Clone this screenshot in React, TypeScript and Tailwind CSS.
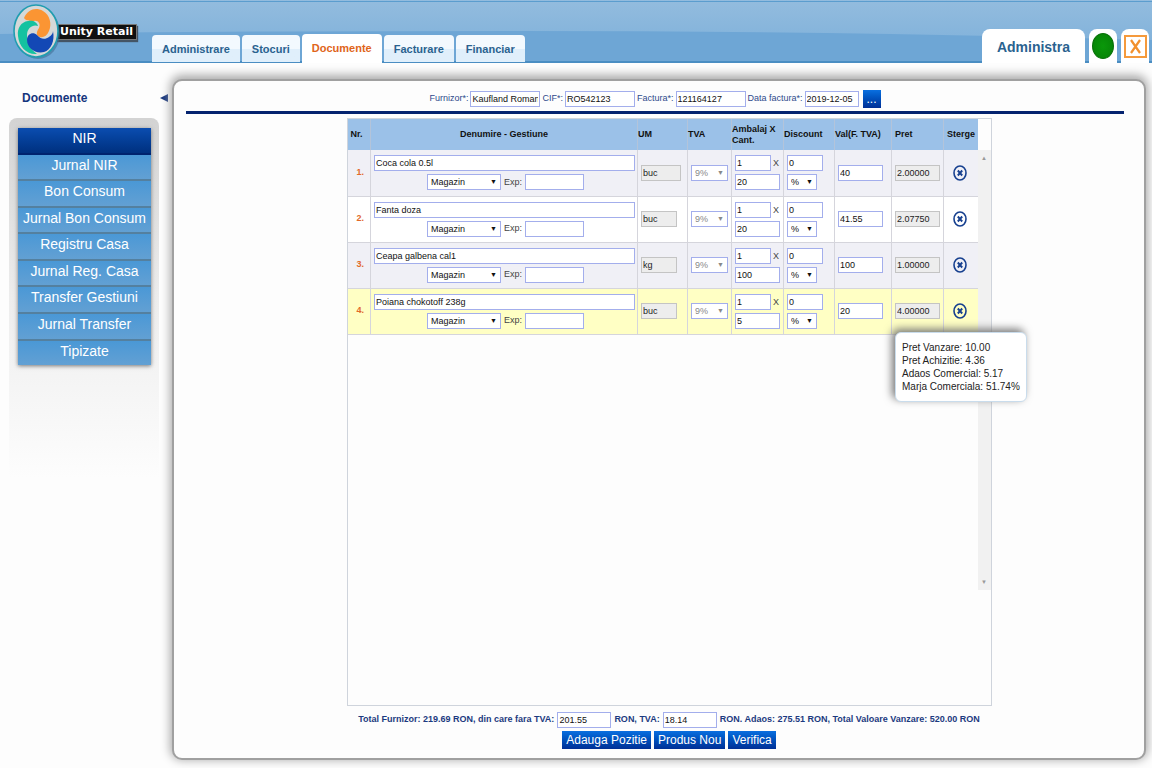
import type { ReactNode } from 'react';

import { clsx } from 'clsx';

const TABS = ['Administrare', 'Stocuri', 'Documente', 'Facturare', 'Financiar'];

const MENU = [
  'NIR',
  'Jurnal NIR',
  'Bon Consum',
  'Jurnal Bon Consum',
  'Registru Casa',
  'Jurnal Reg. Casa',
  'Transfer Gestiuni',
  'Jurnal Transfer',
  'Tipizate',
];

const COLUMNS = [
  { label: 'Nr.', width: 'w-[23px]' },
  { label: 'Denumire - Gestiune', width: 'w-[267px]' },
  { label: 'UM', width: 'w-[50px]' },
  { label: 'TVA', width: 'w-[44px]' },
  { label: 'Ambalaj X Cant.', width: 'w-[52px]' },
  { label: 'Discount', width: 'w-[51px]' },
  { label: 'Val(F. TVA)', width: 'w-[57px]' },
  { label: 'Pret', width: 'w-[52px]' },
  { label: 'Sterge', width: 'w-[34px]' },
];

const ROWS = [
  { name: 'Coca cola 0.5l', um: 'buc', pack: '1', qty: '20', value: '40', price: '2.00000' },
  { name: 'Fanta doza', um: 'buc', pack: '1', qty: '20', value: '41.55', price: '2.07750' },
  { name: 'Ceapa galbena cal1', um: 'kg', pack: '1', qty: '100', value: '100', price: '1.00000' },
  { name: 'Poiana chokotoff 238g', um: 'buc', pack: '1', qty: '5', value: '20', price: '4.00000' },
];

const PRICE_INFO = [
  'Pret Vanzare: 10.00',
  'Pret Achizitie: 4.36',
  'Adaos Comercial: 5.17',
  'Marja Comerciala: 51.74%',
];

const TOTALS_INPUT = 'w-[54px]';

function Field({ label, value, className, disabled }: { label: string; value?: string; className: string; disabled?: boolean }) {
  return (
    <input
      aria-label={label}
      defaultValue={value}
      disabled={disabled}
      className={clsx(
        'block h-4 border px-px text-[9px] leading-3 font-normal outline-none',
        disabled ? 'border-[#c4c4c4] bg-[#ededed] text-[#222]' : 'border-[#a3aeec] bg-white text-[#111]',
        className,
      )}
    />
  );
}

function Dropdown({ label, value, className, disabled }: { label: string; value: string; className: string; disabled?: boolean }) {
  return (
    <span className={clsx('relative block', disabled ? 'text-[#888]' : 'text-[#111]', className)}>
      <select
        aria-label={label}
        disabled={disabled}
        defaultValue={value}
        className="block h-4 w-full appearance-none border border-[#a3aeec] bg-white px-[3px] text-[9px] leading-3 opacity-100">
        <option>{value}</option>
      </select>
      <span aria-hidden="true" className="pointer-events-none absolute top-1 right-1 text-[7px] leading-2">
        ▼
      </span>
    </span>
  );
}

function HeaderField({ label, value, className }: { label: string; value: string; className: string }) {
  return (
    <label className="flex items-center gap-[2px]">
      {label}
      <Field label={label} value={value} className={className} />
    </label>
  );
}

function ActionButton({ children }: { children: ReactNode }) {
  return (
    <button type="button" className="h-[18px] bg-linear-to-b from-[#0a6fe0] to-[#002f96] px-1 text-[12px] leading-4 text-white">
      {children}
    </button>
  );
}

function Logo() {
  return (
    <a href="#" className="flex items-center self-start pl-3">
      <svg viewBox="0 0 48 56" className="relative z-10 h-14 w-12" aria-hidden="true">
        <ellipse cx="26" cy="29" rx="22" ry="26" fill="#3f6f96" opacity=".6" />
        <ellipse cx="24" cy="27" rx="22" ry="26" fill="#d5d8d8" stroke="#209db0" strokeWidth="1.6" />
        <path
          d="M12 14C16 5 24 3 31 7c7 4 9 13 6 20-2 5-6 7-9 6-4-1-4-5-1-9 2-4-1-8-5-7-4 0-8 0-10-3Z"
          fill="#fb9533"
        />
        <path
          d="M6 32c-1-8 3-14 10-15 5-1 9 1 10 5-5-2-11 2-11 9 0 8 3 14 10 19C15 51 7 43 6 32Z"
          fill="#14c2a0"
        />
        <path
          d="M15 36c0-6 6-9 10-5 3 4 8 5 12 2 3-2 4-4 4-6 2 10-2 19-9 21-9 2-17-4-17-12Z"
          fill="#1348b5"
        />
      </svg>
      <span className="-ml-1 border border-[#777] bg-[#101010] px-[3px] font-['DejaVu_Sans'] text-[11px] leading-[14px] font-bold whitespace-nowrap text-white shadow-[1px_2px_1px_#456]">
        Unity Retail
      </span>
    </a>
  );
}

function TopBar() {
  return (
    <header className="relative flex h-[63px] items-end border-b-2 border-[#4a8dc2] bg-[#6ea6d5]">
      <svg viewBox="0 0 1152 61" preserveAspectRatio="none" className="absolute inset-0 h-full w-full" aria-hidden="true">
        <defs>
          <linearGradient id="sky" x1="0" y1="0" x2="0" y2="1">
            <stop offset="0" stopColor="#93bcde" />
            <stop offset="1" stopColor="#83b3db" />
          </linearGradient>
        </defs>
        <path d="M0 0H1152V40Q850 31 520 31Q200 31 0 34Z" fill="url(#sky)" />
        <path d="M0 1.5H1152" stroke="#5b9dce" />
      </svg>
      <div className="relative -mb-0.5 flex h-[63px] w-full items-end">
        <div className="h-[59px] w-[152px]">
          <Logo />
        </div>
        <nav className="flex flex-1 items-end gap-[2px]">
          {TABS.map((tab) => (
            <a
              key={tab}
              href="#"
              className={clsx(
                'rounded-t px-[10px] text-[11px] font-bold whitespace-nowrap',
                tab === 'Documente'
                  ? 'h-[29px] bg-white leading-[29px] text-[#e0651a]'
                  : 'mb-px h-[27px] bg-linear-to-b from-[#f3f9fe] from-50% to-[#e0effb] to-50% leading-[28px] text-[#2a628f]',
              )}>
              {tab}
            </a>
          ))}
        </nav>
        <div className="flex items-end gap-1 pr-[3px]">
          <a href="#" className="h-[34px] rounded-t-lg bg-white px-[15px] text-[14px] leading-9 font-bold text-[#2a628f]">
            Administra
          </a>
          <div className="flex h-[34px] w-7 items-center justify-center rounded-t-lg bg-white">
            <span className="h-[26px] w-[22px] rounded-[50%] border border-[#067006] bg-radial from-[#0a980a] to-[#078007]" />
          </div>
          <div className="flex h-[34px] w-7 items-center justify-center rounded-t-lg bg-white">
            <button type="button" aria-label="Inchide" className="h-[23px] w-[23px] border-2 border-[#f59a3c] text-[#f2902c]">
              <svg viewBox="0 0 19 19" className="h-[19px] w-[19px]" aria-hidden="true">
                <path d="M5 3L14 16M14 3L5 16" stroke="currentColor" strokeWidth="2.2" />
              </svg>
            </button>
          </div>
        </div>
      </div>
    </header>
  );
}

function Sidebar() {
  return (
    <aside className="w-[172px] shrink-0 pt-[25px]">
      <div className="flex items-center justify-between pr-1 pl-[22px]">
        <h2 className="text-[12px] leading-5 font-bold text-[#15357d]">Documente</h2>
        <button type="button" aria-label="Ascunde meniul">
          <svg viewBox="0 0 8 8" className="h-2 w-2" aria-hidden="true">
            <path d="M0 4L8 0V8Z" fill="#15357d" />
          </svg>
        </button>
      </div>
      <nav className="mt-[10px] mr-[13px] ml-[9px] h-[360px] rounded-t-lg bg-linear-to-b from-[#d3d3d3] via-[#ededed] via-50% to-[#fdfdfd] px-2 pt-[10px]">
        <ul className="ml-px flex h-[237px] flex-col shadow-[0_1px_4px_#777]">
          {MENU.map((item) => (
            <li
              key={item}
              className={clsx(
                'flex-1 border-b-2 last:border-b-0',
                item === 'NIR'
                  ? 'border-[#00246f] bg-linear-to-b from-[#0b4db0] to-[#00307f]'
                  : 'border-[#54809f] bg-linear-to-b from-[#4a98d6] to-[#62a0d3]',
              )}>
              <a href="#" className="block text-center text-[14px] leading-5 whitespace-nowrap text-white">
                {item}
              </a>
            </li>
          ))}
        </ul>
      </nav>
    </aside>
  );
}

function ItemsTable() {
  return (
    <table className="w-[630px] table-fixed border-collapse text-[9px]">
      <thead>
        <tr className="h-[31px] bg-[#9bc1e8] text-left leading-[11px] text-[#111]">
          {COLUMNS.map((col, i) => (
            <th
              key={col.label}
              className={clsx(
                'border-r border-[#b3c4da] p-0 font-bold last:border-r-0',
                i === 1 && 'text-center',
                (i === 0 || i > 6) && 'pl-[3px]',
                col.width,
              )}>
              {col.label}
            </th>
          ))}
        </tr>
      </thead>
      <tbody>
        {ROWS.map((row, i) => (
          <tr
            key={row.name}
            className={clsx(
              'h-[46px] border-b border-[#d5d5dc] [&>td]:border-r [&>td]:border-[#d5d5dc] [&>td]:p-0 [&>td]:pl-[3px] [&>td:last-child]:border-r-0',
              i === 3 ? 'bg-[#ffffc4]' : i % 2 ? 'bg-white' : 'bg-[#f0f0f6]',
            )}>
            <td className="text-center font-bold text-[#e2692a]">{i + 1}.</td>
            <td>
              <Field label="Denumire" value={row.name} className="w-[261px]" />
              <div className="mt-[3px] flex items-center justify-center gap-[3px] text-[#444]">
                <Dropdown label="Gestiune" value="Magazin" className="w-[74px]" />
                <label className="flex items-center gap-[3px]">
                  Exp:
                  <Field label="Exp" className="w-[59px]" />
                </label>
              </div>
            </td>
            <td>
              <Field label="UM" value={row.um} disabled className={i === 0 ? 'w-10' : 'w-9'} />
            </td>
            <td>
              <Dropdown label="TVA" value="9%" disabled className="w-[37px]" />
            </td>
            <td>
              <div className="flex items-center gap-[2px] leading-4 text-[#444]">
                <Field label="Ambalaj" value={row.pack} className="w-9" />X
              </div>
              <Field label="Cantitate" value={row.qty} className="mt-[3px] w-[45px]" />
            </td>
            <td>
              <Field label="Discount" value="0" className="w-9" />
              <Dropdown label="Tip discount" value="%" className="mt-[3px] w-[30px]" />
            </td>
            <td>
              <Field label="Valoare" value={row.value} className="w-[45px]" />
            </td>
            <td>
              <div className="relative">
                <Field label="Pret" value={row.price} disabled className="w-[45px]" />
                {i === 3 ? (
                  <div
                    role="tooltip"
                    className="absolute top-[29px] left-0 z-20 rounded-md border border-[#c9dcec] bg-white px-[6px] py-2 text-[10px] leading-[13px] whitespace-nowrap text-[#222] shadow-[-3px_-3px_8px_#777]">
                    {PRICE_INFO.map((line) => (
                      <p key={line}>{line}</p>
                    ))}
                  </div>
                ) : null}
              </div>
            </td>
            <td>
              <button type="button" aria-label={`Sterge ${row.name}`} className="block">
                <svg viewBox="0 0 14 16" className="mx-[6px] h-4 w-[14px]" fill="none" stroke="#17408f" aria-hidden="true">
                  <ellipse cx="7" cy="8" rx="6" ry="7" strokeWidth="1.6" />
                  <path d="M4.8 5.5L9.2 10.5M9.2 5.5L4.8 10.5" strokeWidth="1.9" />
                </svg>
              </button>
            </td>
          </tr>
        ))}
      </tbody>
    </table>
  );
}

export default function App() {
  return (
    <div className="flex min-h-screen flex-col bg-[#fdfdfd] font-['Liberation_Sans',Arial,sans-serif]">
      <TopBar />
      <div className="flex flex-1">
        <Sidebar />
        <main className="mt-4 mr-[6px] mb-2 flex min-w-0 flex-1 flex-col rounded-[10px] border-2 border-[#a0a0a0] bg-[#fdfdfd] pt-[9px] pb-[9px] shadow-[0_-2px_10px_2px_#aaa]">
          <div className="mr-5 ml-3 flex flex-col">
            <form className="flex items-center justify-center gap-[2px] text-[9px] text-[#2f4a8c]">
              <HeaderField label="Furnizor*:" value="Kaufland Roman" className="w-[70px]" />
              <HeaderField label="CIF*:" value="RO542123" className="w-[70px]" />
              <HeaderField label="Factura*:" value="121164127" className="w-[70px]" />
              <HeaderField label="Data factura*:" value="2019-12-05" className="w-[54px]" />
              <button type="button" className="ml-0.5 h-[18px] w-[18px] bg-linear-to-b from-[#0a6fe0] to-[#002f96] text-[12px] leading-3 text-white">
                ...
              </button>
            </form>
            <div className="mt-[3px] h-[3px] bg-[#04236f]" />
          </div>
          <div className="ml-5 flex flex-1 flex-col items-center">
            <section className="mt-1 flex flex-1 flex-col border border-[#cfd4dc]">
              <div className="flex items-start">
                <ItemsTable />
                <div className="mt-[31px] flex h-[440px] w-[13px] flex-col items-center justify-between bg-[#f1f1f1] py-1 text-[6px] leading-2 text-[#999]">
                  <span aria-hidden="true">▲</span>
                  <span aria-hidden="true">▼</span>
                </div>
              </div>
            </section>
            <div className="mt-[6px] flex items-center gap-[3px] text-[9px] font-bold whitespace-nowrap text-[#1c3a80]">
              <span>Total Furnizor: 219.69 RON, din care fara TVA:</span>
              <Field label="Total fara TVA" value="201.55" className={TOTALS_INPUT} />
              <span>RON, TVA:</span>
              <Field label="TVA" value="18.14" className={TOTALS_INPUT} />
              <span>RON. Adaos: 275.51 RON, Total Valoare Vanzare: 520.00 RON</span>
            </div>
            <div className="mt-[3px] flex gap-[3px]">
              <ActionButton>Adauga Pozitie</ActionButton>
              <ActionButton>Produs Nou</ActionButton>
              <ActionButton>Verifica</ActionButton>
            </div>
          </div>
        </main>
      </div>
    </div>
  );
}
